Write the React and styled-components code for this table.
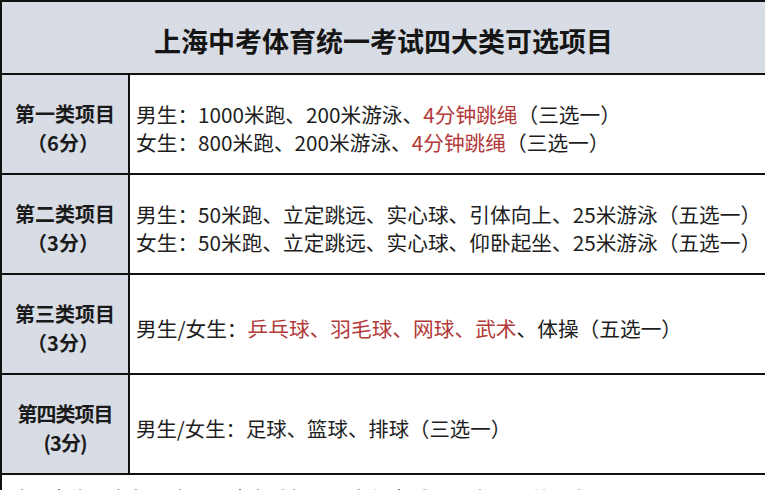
import React from 'react';
import styled, { createGlobalStyle } from 'styled-components';

const GlobalStyle = createGlobalStyle`
  html, body {
    margin: 0;
    padding: 0;
    background: #ffffff;
  }
  body {
    width: 765px;
    height: 490px;
    overflow: hidden;
    font-family: "Noto Sans CJK SC", "Noto Sans", sans-serif;
    color: #1e1e1e;
  }
`;

const rows = [
  {
    name: '第一类项目',
    score: '（6分）',
    lines: [
      [['男生：1000米跑、200米游泳、'], ['4分钟跳绳', true], ['（三选一）']],
      [['女生：800米跑、200米游泳、'], ['4分钟跳绳', true], ['（三选一）']],
    ],
  },
  {
    name: '第二类项目',
    score: '（3分）',
    lines: [
      [['男生：50米跑、立定跳远、实心球、引体向上、25米游泳（五选一）']],
      [['女生：50米跑、立定跳远、实心球、仰卧起坐、25米游泳（五选一）']],
    ],
  },
  {
    name: '第三类项目',
    score: '（3分）',
    lines: [
      [['男生/女生：'], ['乒乓球、羽毛球、网球、武术', true], ['、体操（五选一）']],
    ],
  },
  {
    name: '第四类项目',
    score: '(3分)',
    narrow: true,
    lines: [[['男生/女生：足球、篮球、排球（三选一）']]],
  },
];

function App() {
  return (
    <>
      <GlobalStyle />
      <Table>
        <Title>上海中考体育统一考试四大类可选项目</Title>
        {rows.map((r) => (
          <Row key={r.name}>
            <Label $narrow={r.narrow}>
              <span>{r.name}</span>
              <span>{r.score}</span>
            </Label>
            <Content $narrow={r.narrow}>
              {r.lines.map((line, i) => (
                <Line key={i}>
                  {line.map(([text, red], j) =>
                    red ? <Red key={j}>{text}</Red> : <span key={j}>{text}</span>
                  )}
                </Line>
              ))}
            </Content>
          </Row>
        ))}
        <Note>注：考生须在每一类项目中各选择一项参加考试，四类项目总分为15分。</Note>
      </Table>
    </>
  );
}

const Table = styled.div`
  width: 765px;
  border-top: 2px solid #111;
  border-left: 2px solid #111;
  box-sizing: border-box;
`;

const Title = styled.div`
  height: 73px;
  display: flex;
  align-items: center;
  justify-content: center;
  padding-top: 6px;
  box-sizing: border-box;
  background: #d8dce4;
  border-bottom: 2px solid #111;
  font-size: 27px;
  font-weight: 700;
  color: #151515;
`;

const Row = styled.div`
  display: grid;
  grid-template-columns: 128px 1fr;
  height: 100px;
  border-bottom: 2px solid #111;
  box-sizing: border-box;
`;

const Label = styled.div`
  background: #d8dce4;
  border-right: 2px solid #111;
  display: flex;
  flex-direction: column;
  align-items: center;
  justify-content: center;
  padding-top: 8px;
  font-size: 20px;
  line-height: 29px;
  font-weight: 700;
  color: #1a1a1a;
  letter-spacing: ${(p) => (p.$narrow ? '-1px' : '0')};

  span:last-child {
    margin-left: ${(p) => (p.$narrow ? '0' : '-4px')};
  }
`;

const Content = styled.div`
  display: flex;
  flex-direction: column;
  justify-content: center;
  padding: 7px 0 0 6px;
  font-size: ${(p) => (p.$narrow ? '20.4px' : '20.7px')};
  line-height: 28px;
  white-space: nowrap;
  overflow: hidden;
  color: #1e1e1e;
`;

const Line = styled.div``;

const Red = styled.span`
  color: #b33a3a;
`;

const Note = styled.div`
  padding: 10px 0 0 8px;
  font-size: 20px;
  line-height: 27px;
  white-space: nowrap;
  overflow: hidden;
  color: #2a2a2a;
`;

export default App;
